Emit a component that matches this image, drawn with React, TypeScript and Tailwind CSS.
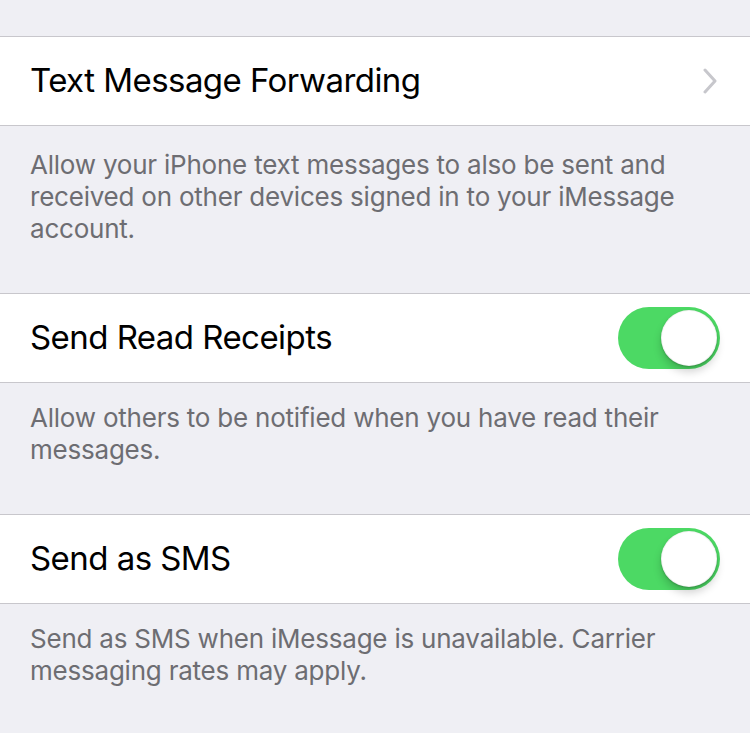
import React, { useState } from "react";

function Toggle({ on, onChange }: { on: boolean; onChange: (v: boolean) => void }) {
  return (
    <button
      type="button"
      onClick={() => onChange(!on)}
      className={`relative h-[62px] w-[102px] shrink-0 rounded-full transition-colors ${
        on ? "bg-[#4cd964]" : "bg-[#e5e5ea]"
      }`}
    >
      <span
        className={`absolute top-[3px] h-[56px] w-[56px] rounded-full border border-black/5 bg-white shadow-[0_6px_8px_rgba(0,0,0,0.18),0_1px_2px_rgba(0,0,0,0.2)] transition-all ${
          on ? "left-[43px]" : "left-[3px]"
        }`}
      />
    </button>
  );
}

function Chevron() {
  return (
    <svg width="16" height="26" viewBox="0 0 16 26" className="shrink-0">
      <path
        d="M3 2 L13 13 L3 24"
        fill="none"
        stroke="#c7c7cc"
        strokeWidth="3"
        strokeLinecap="round"
        strokeLinejoin="round"
      />
    </svg>
  );
}

function Row({ title, children }: { title: string; children: React.ReactNode }) {
  return (
    <div className="flex h-[90px] items-center justify-between border-y border-[#c8c7cc] bg-white pl-[30px] pr-[30px]">
      <span className="text-[33px] tracking-[-0.55px] text-black">{title}</span>
      {children}
    </div>
  );
}

function Footer({ children, top }: { children: React.ReactNode; top: string }) {
  return (
    <p className={`px-[30px] pb-[48px] text-[26px] leading-[32px] tracking-[-0.22px] text-[#6d6d72] ${top}`}>
      {children}
    </p>
  );
}

export default function App() {
  const [readReceipts, setReadReceipts] = useState(true);
  const [sendSms, setSendSms] = useState(true);

  return (
    <div
      className="h-[733px] w-[750px] overflow-hidden bg-[#efeff4] pt-[36px]"
      style={{ fontFamily: "Inter, 'Noto Sans', sans-serif" }}
    >
      <Row title="Text Message Forwarding">
        <div className="pr-[2px]">
          <Chevron />
        </div>
      </Row>
      <Footer top="pt-[23px]">
        Allow your iPhone text messages to also be sent and received on other devices signed in to
        your iMessage account.
      </Footer>

      <Row title="Send Read Receipts">
        <Toggle on={readReceipts} onChange={setReadReceipts} />
      </Row>
      <Footer top="pt-[19px]">Allow others to be notified when you have read their messages.</Footer>

      <Row title="Send as SMS">
        <Toggle on={sendSms} onChange={setSendSms} />
      </Row>
      <Footer top="pt-[19px]">
        Send as SMS when iMessage is unavailable. Carrier messaging rates may apply.
      </Footer>
    </div>
  );
}
